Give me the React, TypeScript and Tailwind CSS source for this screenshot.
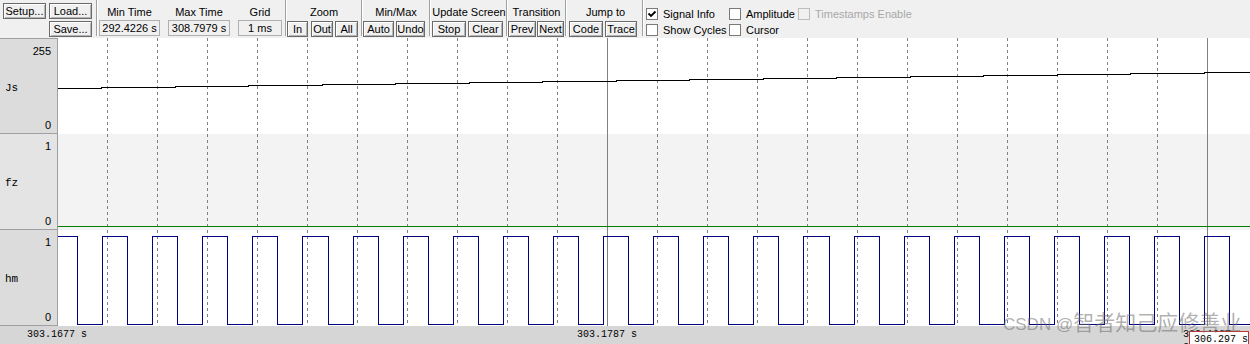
import clsx from 'clsx';

const SIG_P = 50.1;

function jsPath() {
  let d = 'M0 50.5';
  let y = 50.5;
  for (let i = 0; i < 16; i++) {
    const x = Math.round(43 + 73.5 * i);
    y -= 1;
    d += ` H${x} V${y}`;
  }
  return d + ' H1192';
}

function hmPath() {
  let d = 'M0 198.5';
  for (let k = 0; k < 24; k++) {
    const fall = Math.round(19 + k * SIG_P) + 0.5;
    const rise = Math.round(44 + k * SIG_P) + 0.5;
    d += ` H${fall} V286.5`;
    d += rise < 1192 ? ` H${rise} V198.5` : ' H1192';
  }
  return d;
}

const gridXs = Array.from({ length: 23 }, (_, k) => 49.5 + k * 50);

function Btn({ label, w, className }: { label: string; w: string; className?: string }) {
  return (
    <div
      className={clsx(
        'flex h-[16px] items-center justify-center border border-[#6a6a6a] bg-[#f0f0f0] leading-none text-black shadow-[inset_1px_1px_0_#ffffff,inset_-1px_-1px_0_#b5b5b5]',
        w,
        className
      )}
    >
      {label}
    </div>
  );
}

function Sep() {
  return <div className="h-[36px] w-[2px] border-l border-[#a0a0a0] bg-white" />;
}

function Group({ label, w, children }: { label: string; w: string; children: React.ReactNode }) {
  return (
    <div className={clsx('flex flex-col', w)}>
      <div className="h-[21px] pt-[6px] text-center leading-[13px]">{label}</div>
      <div className="flex">{children}</div>
    </div>
  );
}

function Field({ label, value, w }: { label: string; value: string; w: string }) {
  return (
    <div className={clsx('flex flex-col', w)}>
      <div className="h-[20px] pt-[6px] text-center leading-[13px]">{label}</div>
      <div className="flex h-[16px] items-center justify-center border border-[#b0b0b0] bg-[#f0f0f0] leading-none">
        {value}
      </div>
    </div>
  );
}

function Check({ label, checked, disabled, w }: { label: string; checked?: boolean; disabled?: boolean; w?: string }) {
  return (
    <div className={clsx('flex h-[12px] items-center', w)}>
      <div
        className={clsx(
          'flex h-[12px] w-[12px] items-center justify-center border',
          disabled ? 'border-[#bcbcbc] bg-[#f0f0f0]' : 'border-[#7a7a7a] bg-white'
        )}
      >
        {checked && (
          <svg width="10" height="10" viewBox="0 0 10 10">
            <path d="M1.5 4.5 L4 7 L8.5 2.5" fill="none" stroke="#000" strokeWidth="1.8" />
          </svg>
        )}
      </div>
      <span className={clsx('ml-[5px] leading-[13px]', disabled ? 'text-[#a8a8a8]' : 'text-black')}>{label}</span>
    </div>
  );
}

function RowLabel({ name, top, bottom, bg, first }: { name: string; top: string; bottom: string; bg: string; first?: boolean }) {
  return (
    <div className={clsx('flex h-[96px] flex-col justify-between border-b border-[#a0a0a0]', bg, first && 'border-t')}>
      <div className="h-[20px] pt-[6px] pr-[6px] text-right leading-[13px]">{top}</div>
      <div className="pl-[5px] font-['Liberation_Mono',monospace] text-[11px] leading-[13px]">{name}</div>
      <div className="h-[16px] pt-[2px] pr-[6px] text-right leading-[13px]">{bottom}</div>
    </div>
  );
}

export default function App() {
  return (
    <div className="relative h-[344px] w-[1250px] overflow-hidden bg-[#f0f0f0] font-['Liberation_Sans',Arial,sans-serif] text-[11px] text-black">
      {/* toolbar */}
      <div className="flex h-[38px] items-start">
        <div className="w-[96px] pl-[3px] pt-[3px]">
          <div className="flex gap-[3px]">
            <Btn label="Setup..." w="w-[43px]" />
            <Btn label="Load..." w="w-[43px]" />
          </div>
          <Btn label="Save..." w="w-[43px]" className="ml-[46px] mt-[2px]" />
        </div>
        <Sep />
        <div className="flex w-[187px] gap-[8px] pl-[1px]">
          <Field label="Min Time" value="292.4226 s" w="w-[61px]" />
          <Field label="Max Time" value="308.7979 s" w="w-[62px]" />
          <Field label="Grid" value="1 ms" w="w-[44px]" />
        </div>
        <Sep />
        <Group label="Zoom" w="w-[74px]">
          <Btn label="In" w="w-[21px]" />
          <Btn label="Out" w="w-[22px]" className="ml-[3px]" />
          <Btn label="All" w="w-[23px]" className="ml-[2px]" />
        </Group>
        <Sep />
        <Group label="Min/Max" w="w-[66px]">
          <Btn label="Auto" w="w-[31px]" />
          <Btn label="Undo" w="w-[29px]" className="ml-[2px]" />
        </Group>
        <Sep />
        <div className="w-[1px]" />
        <Group label="Update Screen" w="w-[74px]">
          <Btn label="Stop" w="w-[34px]" />
          <Btn label="Clear" w="w-[35px]" className="ml-[2px]" />
        </Group>
        <Sep />
        <Group label="Transition" w="w-[57px]">
          <Btn label="Prev" w="w-[28px]" />
          <Btn label="Next" w="w-[27px]" className="ml-[1px]" />
        </Group>
        <Sep />
        <div className="w-[2px]" />
        <Group label="Jump to" w="w-[73px]">
          <Btn label="Code" w="w-[34px]" />
          <Btn label="Trace" w="w-[32px]" className="ml-[2px]" />
        </Group>
        <Sep />
        <div className="flex flex-col gap-[4px] pl-[2px] pt-[8px]">
          <div className="flex">
            <Check label="Signal Info" checked w="w-[83px]" />
            <Check label="Amplitude" w="w-[69px]" />
            <Check label="Timestamps Enable" disabled />
          </div>
          <div className="flex">
            <Check label="Show Cycles" w="w-[83px]" />
            <Check label="Cursor" />
          </div>
        </div>
      </div>

      {/* signals */}
      <div className="flex h-[288px]">
        <div className="w-[58px] border-r border-[#a0a0a0]">
          <RowLabel name="Js" top="255" bottom="0" bg="bg-[#dcdcdc]" first />
          <RowLabel name="fz" top="1" bottom="0" bg="bg-[#e4e4e4]" />
          <RowLabel name="hm" top="1" bottom="0" bg="bg-[#dcdcdc]" />
        </div>
        <div className="relative flex-1">
          <div className="h-[96px] bg-white" />
          <div className="h-[96px] bg-[#f3f3f3]" />
          <div className="h-[96px] bg-white" />
          <svg className="absolute inset-0" width="1192" height="288" shapeRendering="crispEdges">
            {gridXs.map((x, k) =>
              k === 10 || k === 22 ? (
                <line key={k} x1={x} y1={0} x2={x} y2={288} stroke="#808080" strokeWidth="1" />
              ) : (
                <line key={k} x1={x} y1={0} x2={x} y2={288} stroke="#808080" strokeWidth="1" strokeDasharray="3 3" />
              )
            )}
            <path d={jsPath()} fill="none" stroke="#000000" strokeWidth="1" />
            <line x1={0} y1={188.5} x2={1192} y2={188.5} stroke="#008000" strokeWidth="1" />
            <path d={hmPath()} fill="none" stroke="#000080" strokeWidth="1" />
          </svg>
        </div>
      </div>

      {/* time axis */}
      <div className="relative h-[18px] bg-[#d6d6d6] font-['Liberation_Mono',monospace] text-[10px]">
        <span className="absolute left-[57px] top-[3px] -translate-x-1/2 leading-[12px]">303.1677 s</span>
        <span className="absolute left-[607px] top-[3px] -translate-x-1/2 leading-[12px]">303.1787 s</span>
        <span className="absolute left-[1207px] top-[3px] -translate-x-1/2 leading-[12px]">303.1907 s</span>
        <div className="absolute left-[1189px] top-[5px] h-[16px] w-[60px] border border-[#c83232] bg-white pl-[4px] pt-[2px] leading-[12px]">
          306.297 s
        </div>
      </div>

      {/* watermark */}
      <div className="pointer-events-none absolute left-[1003px] top-[309px] flex items-baseline whitespace-nowrap text-[rgba(110,110,110,0.55)]">
        <span className="text-[17px]">CSDN @</span>
        <span className="font-['Noto_Sans_CJK_SC',sans-serif] text-[21px] leading-[24px]">智者知己应修善业</span>
      </div>
    </div>
  );
}
